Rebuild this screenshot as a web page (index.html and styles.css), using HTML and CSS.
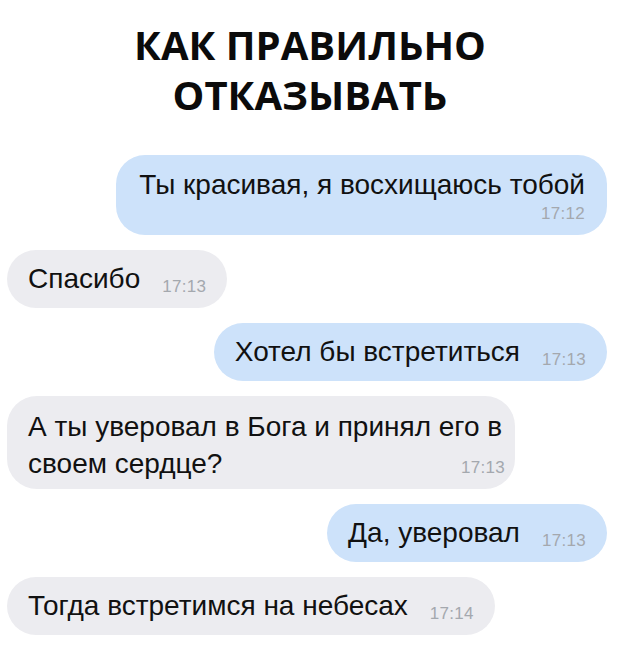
FILE: index.html
```html
<!DOCTYPE html>
<html lang="ru">
<head>
    <meta charset="UTF-8">
    <meta name="viewport" content="width=device-width, initial-scale=1.0">
    <title>Как правильно отказывать</title>
    <link rel="stylesheet" href="styles.css">
</head>
<body>
    <div class="page">
        <h1 class="title">КАК ПРАВИЛЬНО<br>ОТКАЗЫВАТЬ</h1>

        <div class="chat">
            <div class="msg out stacked">
                <span class="text">Ты красивая, я восхищаюсь тобой</span>
                <span class="time">17:12</span>
            </div>

            <div class="msg in">
                <span class="text">Спасибо</span><span class="time">17:13</span>
            </div>

            <div class="msg out">
                <span class="text">Хотел бы встретиться</span><span class="time">17:13</span>
            </div>

            <!-- длинное сообщение: две строки, время в конце последней -->
            <div class="msg in wrapped">
                <span class="line">А ты уверовал в Бога и принял его в</span>
                <span class="line last"><span class="text">своем сердце?</span><span class="time">17:13</span></span>
            </div>

            <div class="msg out">
                <span class="text">Да, уверовал</span><span class="time">17:13</span>
            </div>

            <div class="msg in">
                <span class="text">Тогда встретимся на небесах</span><span class="time">17:14</span>
            </div>
        </div>
    </div>
</body>
</html>
```

FILE: styles.css
```css
* {
    margin: 0;
    padding: 0;
    box-sizing: border-box;
}

body {
    background-color: #fff;
    font-family: "Liberation Sans", Arial, sans-serif;
    color: #111;
}

.page {
    padding-top: 20px;
}

.title {
    font-family: "Open Sans", "Liberation Sans", sans-serif;
    font-size: 40px;
    line-height: 50px;
    font-weight: 700;
    text-align: center;
    color: #0b0b0b;
    margin-bottom: 35px;
}

.chat {
    display: flex;
    flex-direction: column;
    align-items: flex-start;
    gap: 15px;
    padding: 0 13px 0 7px;
}

/* Пузырь сообщения */
.msg {
    padding: 12px 21px 12px 21px;
    border-radius: 29px;
    font-size: 28px;
    line-height: 34px;
    white-space: nowrap;
}

.msg.in {
    background-color: #ececf0;
}

.msg.out {
    align-self: flex-end;
    background-color: #cde2fa;
}

.time {
    font-size: 17px;
    line-height: 16px;
    letter-spacing: 0.3px;
    color: #a4a8ae;
    margin-left: 22px;
    vertical-align: -4px;
}

/* время под текстом */
.msg.stacked {
    display: flex;
    flex-direction: column;
    padding: 13px 22px 11px 23px;
}

.msg.stacked .time {
    align-self: flex-end;
    margin: 2px 0 0;
    line-height: 20px;
}

/* две строки, время справа на последней */
.msg.wrapped {
    display: flex;
    flex-direction: column;
    width: 508px;
    line-height: 37px;
    padding: 12px 10px 7px 21px;
    border-radius: 30px;
}

.msg.wrapped .last {
    display: flex;
    justify-content: space-between;
    align-items: baseline;
}
```
